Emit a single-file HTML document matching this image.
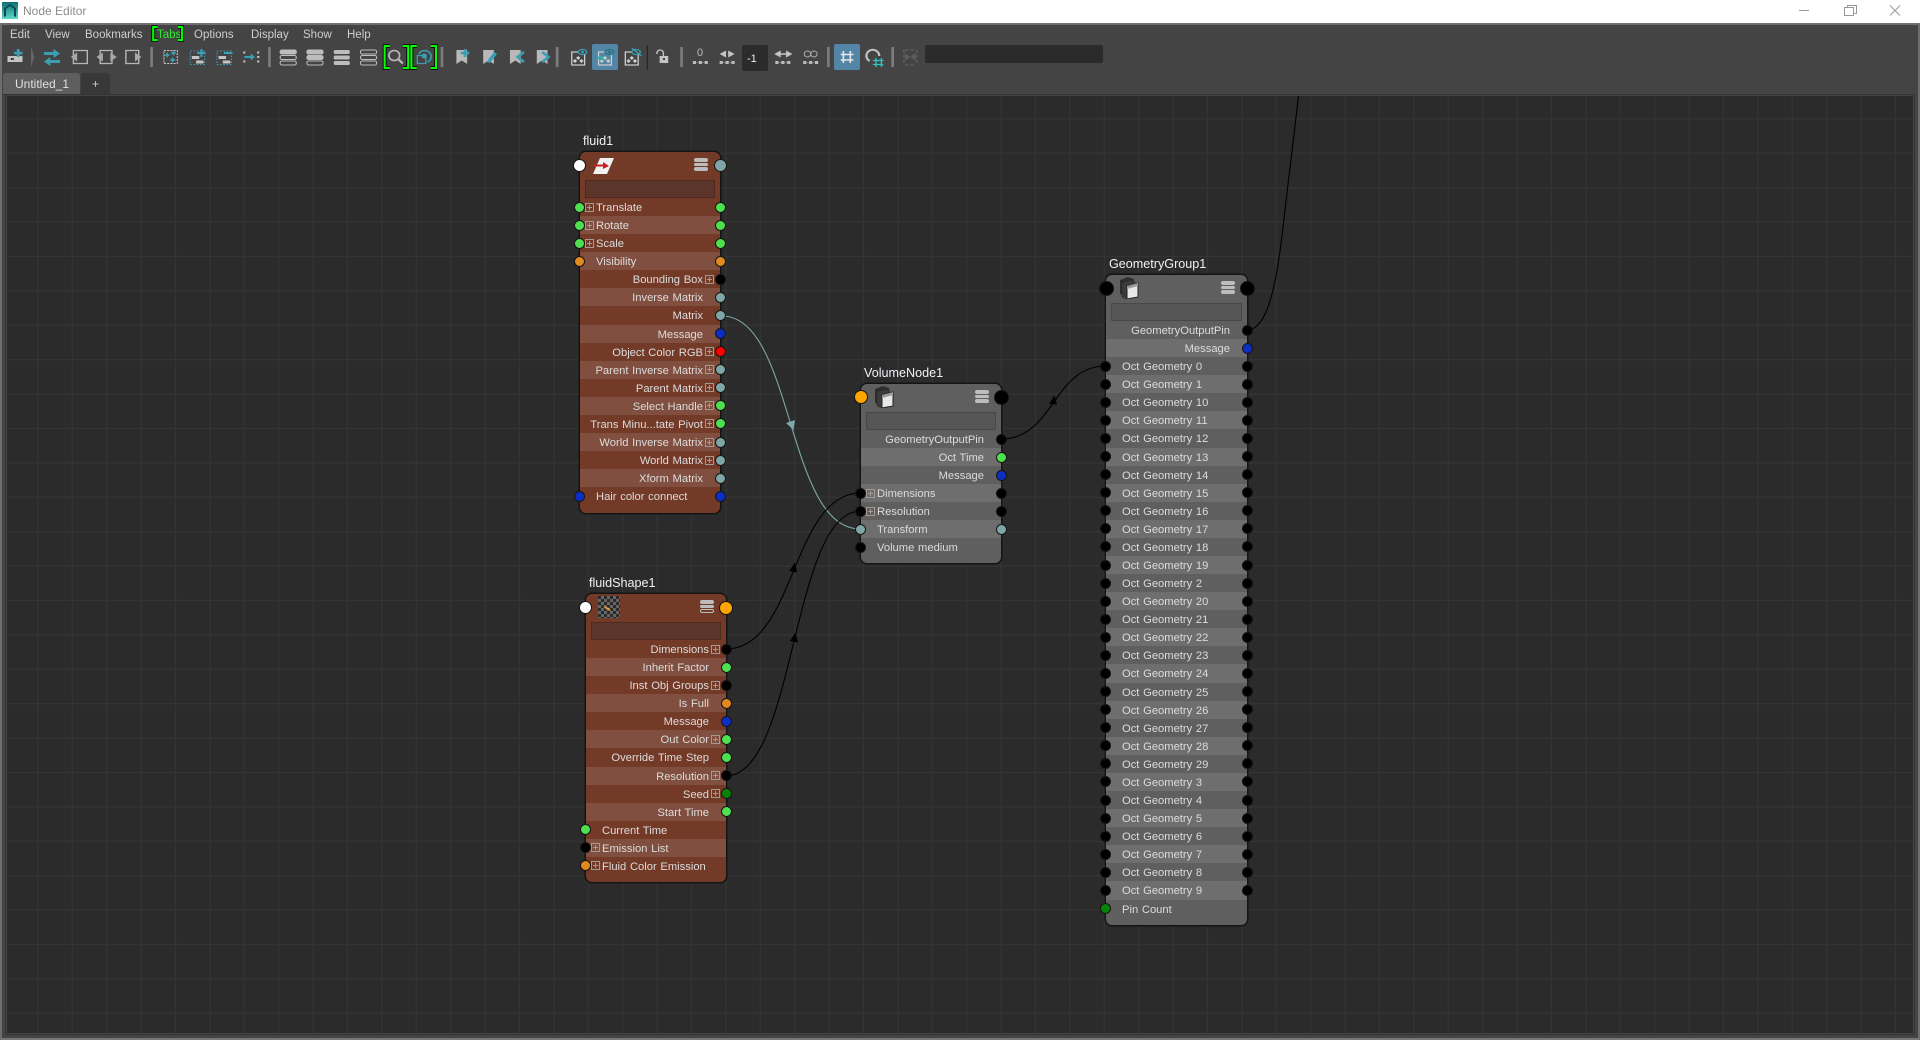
<!DOCTYPE html>
<html><head><meta charset="utf-8"><title>Node Editor</title>
<style>
html,body{margin:0;padding:0;width:1920px;height:1040px;overflow:hidden;background:#444;font-family:"Liberation Sans",sans-serif;font-size:12px;color:#d6d6d6}
.a{position:absolute}
#title{left:0;top:0;width:1920px;height:23px;background:#fff}
#frame{left:0;top:23px;width:1920px;height:1017px;box-sizing:border-box;border:2px solid #6e6e6e;border-bottom-color:#777;background:#444}
.m{position:absolute;top:28px;line-height:15px;font-size:11.5px;color:#cfcfcf;white-space:nowrap}
.n{position:absolute;border-radius:6px;box-shadow:0 0 0 1.5px #141414}
.f{background:#733a28}.h{background:#5f5f5f}
.nm{position:absolute;left:3px;top:-19px;font-size:12.6px;line-height:16px;color:#eef2f6;white-space:nowrap}
.s{position:absolute;left:5px;right:5px;top:28px;height:18px;box-sizing:border-box;border:1px solid}
.f .s{background:#5b3529;border-color:#4e2a1e}.h .s{background:#565656;border-color:#484848}
.rs{position:absolute;left:0;right:0;top:46px}
.r{position:relative;height:18.09px;line-height:20px;font-size:11.2px;word-spacing:.6px;color:#dcdcdc;white-space:nowrap}
.f .r:nth-child(even){background:#804f3f}
.h .r:nth-child(even){background:#6e6e6e}
.tl{position:absolute;left:16px}.tr{position:absolute;right:17px}
.p{position:absolute;top:3.5px;width:11px;height:11px;box-sizing:border-box;border:1px solid #141414;border-radius:50%}
.L{left:-6.5px}.R{right:-5.5px}
.g{background:#4ee04e}.o{background:#e08a1e}.b{background:#0b2fc4}.k{background:#000}.t{background:#7fa6a6}.e{background:#f00}.d{background:#078407}
.x{position:absolute;top:4.5px;width:9px;height:9px;box-sizing:border-box;border:1px solid #a39a96;background:linear-gradient(#a39a96,#a39a96) center/5px 1px no-repeat,linear-gradient(#a39a96,#a39a96) center/1px 5px no-repeat}
.xl{left:5px}.xr{right:6px}
.hp{position:absolute;top:7px;width:13px;height:13px;box-sizing:border-box;border-radius:50%;border:1px solid #141414}
.mn{position:absolute;top:6px;width:14px;height:14px}
.mn b{display:block;height:3.6px;margin-bottom:1px;background:#bdbdbd;border-radius:2px}
.mn b.u{background:none;box-sizing:border-box;border:1px solid #bdbdbd}
</style></head>
<body>
<div id="title" class="a">
<svg class="a" style="left:2px;top:2px" width="16" height="17"><defs><linearGradient id="lg" x1="0" y1="0" x2="0" y2="1"><stop offset="0" stop-color="#0c6f73"/><stop offset="1" stop-color="#5fd8c8"/></linearGradient></defs><rect width="16" height="17" fill="url(#lg)"/><path d="M2 15V6l6-4 6 4v9l-2-1V7L8 4 4 7v7z" fill="#0a4a55"/></svg>
<div class="a" style="left:23px;top:4px;line-height:15px;color:#8c8c8c">Node Editor</div>
<svg class="a" style="left:1790px;top:0" width="130" height="23" fill="none" stroke="#999" stroke-width="1"><path d="M9 10.5H19"/><path d="M54.500 7.500h9v8h-9zM57.500 7.500v-2h9v8h-3"/><path d="M100 5.500l10 10M110 5.500l-10 10"/></svg>
</div>
<div id="frame" class="a"></div>

<div class="m" style="left:10px">Edit</div>
<div class="m" style="left:45px">View</div>
<div class="m" style="left:85px">Bookmarks</div>
<div class="m" style="left:157px;color:#2fe82f">Tabs</div>
<div class="m" style="left:194px">Options</div>
<div class="m" style="left:251px">Display</div>
<div class="m" style="left:303px">Show</div>
<div class="m" style="left:347px">Help</div>

<div class="a" style="left:592px;top:44px;width:26px;height:26px;background:#5285a6;border-radius:2px"></div>
<div class="a" style="left:834px;top:44px;width:26px;height:26px;background:#5285a6;border-radius:2px"></div>
<div class="a" style="left:742px;top:45px;width:26px;height:26px;background:#2b2b2b;border-radius:2px;color:#eee;font-size:11px;line-height:28px;text-indent:5px">-1</div>
<div class="a" style="left:925px;top:45px;width:178px;height:18px;background:#2b2b2b;border-radius:2px"></div>
<div class="a" style="left:700px;top:47px;width:10px;margin-left:-5px;text-align:center;font-size:11px;line-height:13px;color:#bbb">0</div>

<svg class="a" style="left:0;top:0" width="1200" height="96" fill="none">
<defs>
<g id="lst0"><rect x="-7.500" y="-7" width="15" height="4" rx="1.500" stroke="#bdbdbd"/><rect x="-7.500" y="-1.500" width="15" height="4" rx="1.500" stroke="#bdbdbd"/><rect x="-7.500" y="4" width="15" height="4" rx="1.500" stroke="#bdbdbd"/></g>
<g id="eb"><rect x="-6" y="-6" width="12" height="13" stroke="#cfcfcf" stroke-width="1.200"/><path d="M0-2l2 2-2 2-2-2zM-3 1l2 2-2 2-2-2zM3 1l2 2-2 2-2-2z" fill="#cfcfcf"/></g>
<g id="dr"><rect x="-7" y="6" width="3" height="3" fill="#bbb"/><rect x="-1.500" y="6" width="3" height="3" fill="#bbb"/><rect x="4" y="6" width="3" height="3" fill="#bbb"/><path d="M-3.500 7.500h2M1.500 7.500h2.500" stroke="#777"/></g>
</defs>
<g transform="scale(1.0714 1)">
<!-- add node -->
<rect x="7" y="56" width="14" height="6" fill="#c4c4c4"/><rect x="10" y="58" width="3" height="2" fill="#444"/>
<path d="M17 49v8M13 53h8" stroke="#3a9fb5" stroke-width="2.500"/>
<path d="M29 47l3 10-3 10" fill="#666"/>
<!-- swap -->
<path d="M41 53.500h10" stroke="#3a9fb5" stroke-width="3"/><path d="M50 49l6 4.500-6 4.500z" fill="#3a9fb5"/>
<path d="M46 61.500h10" stroke="#3a9fb5" stroke-width="3"/><path d="M47 57l-6 4.500 6 4.500z" fill="#3a9fb5"/>
<!-- box arrows -->
<rect x="68.500" y="50.500" width="13" height="13" stroke="#b5b5b5" stroke-width="1.300"/><path d="M72 52.500v9l-6-4.500z" fill="#a8a8a8"/>
<rect x="93.500" y="50.500" width="11" height="13" stroke="#b5b5b5" stroke-width="1.300"/><path d="M96 52.500v9l-6-4.500zM103 52.500v9l6-4.500z" fill="#a8a8a8"/>
<rect x="117.500" y="50.500" width="12" height="13" stroke="#b5b5b5" stroke-width="1.300"/><path d="M126 52.500v9l6-4.500z" fill="#a8a8a8"/>
<path d="M141.500 47v20" stroke="#7c7c7c" stroke-width="2.500"/>
<!-- dotted frames -->
<rect x="153" y="50.500" width="12.500" height="13" stroke="#c5c5c5" stroke-dasharray="2 1"/><path d="M156 52l1 2 2 1-2 1-1 2-1-2-2-1 2-1zM162 50l1 2 2 1-2 1-1 2-1-2-2-1 2-1zM161 57l1.200 2 2 1-2 1-1.200 2-1-2-2-1 2-1z" fill="#3a9fb5"/>
<rect x="177.500" y="51" width="13.500" height="13.500" stroke="#3a9fb5" stroke-dasharray="1.500 1.500"/><rect x="179" y="56" width="7" height="3" fill="#c4c4c4"/><rect x="183" y="60.500" width="7" height="3" fill="#c4c4c4"/><path d="M188 49v8M184 53h8" stroke="#3a9fb5" stroke-width="2"/>
<rect x="202.500" y="51" width="13.500" height="13.500" stroke="#3a9fb5" stroke-dasharray="1.500 1.500"/><rect x="204" y="56" width="7" height="3" fill="#c4c4c4"/><rect x="208" y="60.500" width="7" height="3" fill="#c4c4c4"/><path d="M209 53h8" stroke="#3a9fb5" stroke-width="2"/>
<path d="M227 52.500h2M227 61.500h2M240 52.500h2M240 57h2M240 61.500h2" stroke="#c5c5c5" stroke-width="2"/><path d="M228 57h8" stroke="#3a9fb5" stroke-width="2"/><path d="M234 53.500l4 3.500-4 3.500z" fill="#3a9fb5"/>
<path d="M251.500 47v20" stroke="#7c7c7c" stroke-width="2.500"/>
<!-- stacks -->
<g transform="translate(269 57)"><use href="#lst0"/><rect x="-7.500" y="-7" width="15" height="4" rx="1.500" fill="#bdbdbd"/></g>
<g transform="translate(294 57)"><use href="#lst0"/><rect x="-7.500" y="-7" width="15" height="4" rx="1.500" fill="#bdbdbd"/><rect x="-7.500" y="-1.500" width="15" height="4" rx="1.500" fill="#bdbdbd"/></g>
<g transform="translate(319 57)"><rect x="-7.500" y="-7" width="15" height="4" rx="1.500" fill="#bdbdbd"/><rect x="-7.500" y="-1.500" width="15" height="4" rx="1.500" fill="#bdbdbd"/><rect x="-7.500" y="4" width="15" height="4" rx="1.500" fill="#bdbdbd"/></g>
<g transform="translate(344 57)"><use href="#lst0"/></g>
<!-- brackets -->
<g stroke="#000" stroke-width="3.500"><path d="M364 46h-5v22h5M376 46h5v22h-5M389 46h-5v22h5M402 46h5v22h-5M147 27h-4v13h4M166 27h4v13h-4"/></g>
<g stroke="#0f0" stroke-width="2"><path d="M364 46h-5v22h5M376 46h5v22h-5M389 46h-5v22h5M402 46h5v22h-5M147 27h-4v13h4M166 27h4v13h-4"/></g>
<circle cx="368" cy="55.500" r="5" stroke="#bdbdbd" stroke-width="1.500"/><path d="M372 59.500l4 4" stroke="#bdbdbd" stroke-width="2"/>
<rect x="389.500" y="55.500" width="8" height="8" stroke="#3a9fb5" stroke-width="1.200"/><path d="M391 54a6 6 0 1 1 8 8" stroke="#3a9fb5" stroke-width="1.500"/><circle cx="396" cy="56" r="2.500" fill="#3a9fb5"/>
<path d="M412.500 47v20" stroke="#7c7c7c" stroke-width="2.500"/>
<!-- bookmarks -->
<g fill="#b9b9b9"><path d="M426 50h10v14l-5-3.500-5 3.500z"/><path d="M451 50h10v14l-5-3.500-5 3.500z"/><path d="M476 50h10v14l-5-3.500-5 3.500z"/><path d="M501 50h10v14l-5-3.500-5 3.500z"/></g>
<path d="M434 49v8M430 53h8" stroke="#3a9fb5" stroke-width="2.500"/>
<path d="M454 62l7-10 3 2-7 9z" fill="#3a9fb5"/>
<path d="M489 52l-6 5 6 5" stroke="#3a9fb5" stroke-width="2.500"/>
<path d="M506 52l6 5-6 5" stroke="#3a9fb5" stroke-width="2.500"/>
<path d="M520 47v20" stroke="#7c7c7c" stroke-width="2.500"/>
</g>
<g transform="translate(-40 0) scale(1.0714 1)">
<!-- eyes -->
<g transform="translate(577 58)"><use href="#eb"/><ellipse cx="4" cy="-6" rx="4" ry="2.500" stroke="#3a9fb5" stroke-width="1.200" fill="#444"/><circle cx="4" cy="-6" r="1.300" fill="#3a9fb5"/></g>
<g transform="translate(602 58)"><use href="#eb"/><ellipse cx="4" cy="-6" rx="4" ry="2.500" stroke="#2a6f80" stroke-width="1.200" fill="#5285a6"/><circle cx="4" cy="-6" r="1.300" fill="#2a6f80"/><circle cx="-4" cy="0" r="2.500" fill="#3aa"/></g>
<g transform="translate(627 58)"><use href="#eb"/><ellipse cx="4" cy="-6" rx="4" ry="2.500" stroke="#3a9fb5" stroke-width="1.200" fill="#444"/><path d="M0-10l9 8" stroke="#3a9fb5" stroke-width="1.200"/></g>
<path d="M641.500 45v25" stroke="#222"/>
<!-- lock -->
<rect x="653" y="56" width="8" height="7" fill="#c4c4c4"/><rect x="656" y="58" width="2" height="2" fill="#444"/><path d="M650.500 54v-1a3 3 0 0 1 6 0v3" stroke="#c4c4c4" stroke-width="1.300"/>
<path d="M673.500 47v20" stroke="#7c7c7c" stroke-width="2.500"/>
<!-- spacing -->
<use href="#dr" x="691" y="55"/>
<path d="M715 50.500l-6 3.500 6 3.500zM717 50.500l6 3.500-6 3.500z" fill="#c4c4c4"/><use href="#dr" x="716" y="55"/>
<path d="M766 50.500l-6 3.500 6 3.500zM771 50.500l6 3.500-6 3.500z" fill="#c4c4c4"/><path d="M765 54h8" stroke="#c4c4c4" stroke-width="1.500"/><use href="#dr" x="768" y="55"/>
<circle cx="791" cy="54" r="3" stroke="#aaa"/><circle cx="797" cy="54" r="3" stroke="#aaa"/><use href="#dr" x="794" y="55"/>
<path d="M810.500 47v20" stroke="#7c7c7c" stroke-width="2.500"/>
<path d="M824.500 51v12M831 51v12M822 54.500h12M822 60h12" stroke="#e6e6e6" stroke-width="1.500"/>
<!-- magnet -->
<path d="M849 61a6 6 0 1 1 9-5" stroke="#c4c4c4" stroke-width="2"/><path d="M855 58v9M860 58v9M852 60.500h10M852 64.500h10" stroke="#2fc4c4" stroke-width="1.300"/>
<path d="M870.500 47v20" stroke="#7c7c7c" stroke-width="2.500"/>
<path d="M882 50h10M882 65h10M881 50v15M893 50v15" stroke="#5c5c5c" stroke-width="1.500" stroke-dasharray="3 2"/><path d="M882 53l5 4-5 4zM892 53l-5 4 5 4z" fill="#5c5c5c"/>
</g>
</svg>

<!-- tabs -->
<div class="a" style="left:3px;top:73px;width:77px;height:21px;background:#5e5e5e;border-radius:3px 3px 0 0;line-height:22px;text-indent:12px;color:#e2e2e2">Untitled_1</div>
<div class="a" style="left:81px;top:73px;width:29px;height:21px;background:#383838;border-radius:3px 3px 0 0;line-height:23px;text-align:center;color:#ccc">+</div>
<div class="a" style="left:3px;top:94px;width:1912px;height:1px;background:#333"></div>

<!-- canvas -->
<svg class="a" style="left:0;top:0" width="1920" height="1040" fill="none">
<defs>
<pattern id="gr" patternUnits="userSpaceOnUse" x="2.900" y="15.100" width="34.400" height="34.400"><path d="M.5 0V34.400M0 .5H34.400" stroke="#353535" stroke-width="1.200"/></pattern>
<clipPath id="cl"><rect x="7" y="96" width="1906" height="937"/></clipPath>
</defs>
<rect x="7" y="96" width="1906" height="937" fill="#2b2b2b"/>
<rect x="7" y="96" width="1906" height="937" fill="url(#gr)"/>
<rect x="5.500" y="94.500" width="1909" height="940" stroke="#333"/>
<g clip-path="url(#cl)" stroke-width="1.100">
<path d="M722 316C794 316 786 529 860 529" stroke="#7fa8a8"/>
<path d="M786 423l9-3-1.500 10z" fill="#7fa8a8"/>
<path d="M726 649C796 649 791 493 861 493" stroke="#000"/>
<path d="M789 571l8 1.500-2-10z" fill="#000"/>
<path d="M726 775.700C796 775.700 791 511 861 511" stroke="#000"/>
<path d="M790 641l8 1.500-2.500-10z" fill="#000"/>
<path d="M1001 439C1054 439 1053 366 1106 366" stroke="#000"/>
<path d="M1049 404l8 .5-2.500-9z" fill="#000"/>
<path d="M1247 330C1272 330 1279 262 1285 210S1296 120 1299 90" stroke="#000"/>
</g>
</svg>

<!-- fluid1 -->
<div class="n f" style="left:580px;top:152px;width:140px;height:361px">
<div class="nm">fluid1</div>
<div class="hp" style="left:-7.500px;background:#fff"></div>
<svg class="a" style="left:12px;top:4px" width="22" height="20"><path d="M8 2h14l-7 16H1z" fill="#f2f2f2"/><path d="M1 9.500h11" stroke="#c8202a" stroke-width="2"/><path d="M11 6l6 4-6 3z" fill="#c8202a"/></svg>
<div class="mn" style="right:12px"><b></b><b></b><b></b></div>
<div class="hp t" style="right:-6.500px"></div>
<div class="s"></div>
<div class="rs">
<div class="r"><i class="p L g"></i><i class="x xl"></i><span class="tl">Translate</span><i class="p R g"></i></div>
<div class="r"><i class="p L g"></i><i class="x xl"></i><span class="tl">Rotate</span><i class="p R g"></i></div>
<div class="r"><i class="p L g"></i><i class="x xl"></i><span class="tl">Scale</span><i class="p R g"></i></div>
<div class="r"><i class="p L o"></i><span class="tl">Visibility</span><i class="p R o"></i></div>
<div class="r"><span class="tr">Bounding Box</span><i class="x xr"></i><i class="p R k"></i></div>
<div class="r"><span class="tr">Inverse Matrix</span><i class="p R t"></i></div>
<div class="r"><span class="tr">Matrix</span><i class="p R t"></i></div>
<div class="r"><span class="tr">Message</span><i class="p R b"></i></div>
<div class="r"><span class="tr">Object Color RGB</span><i class="x xr"></i><i class="p R e"></i></div>
<div class="r"><span class="tr">Parent Inverse Matrix</span><i class="x xr"></i><i class="p R t"></i></div>
<div class="r"><span class="tr">Parent Matrix</span><i class="x xr"></i><i class="p R t"></i></div>
<div class="r"><span class="tr">Select Handle</span><i class="x xr"></i><i class="p R g"></i></div>
<div class="r"><span class="tr">Trans Minu...tate Pivot</span><i class="x xr"></i><i class="p R g"></i></div>
<div class="r"><span class="tr">World Inverse Matrix</span><i class="x xr"></i><i class="p R t"></i></div>
<div class="r"><span class="tr">World Matrix</span><i class="x xr"></i><i class="p R t"></i></div>
<div class="r"><span class="tr">Xform Matrix</span><i class="p R t"></i></div>
<div class="r"><i class="p L b"></i><span class="tl">Hair color connect</span><i class="p R b"></i></div>
</div></div>

<!-- fluidShape1 -->
<div class="n f" style="left:586px;top:594px;width:140px;height:288px">
<div class="nm">fluidShape1</div>
<div class="hp" style="left:-7.500px;background:#fff"></div>
<svg class="a" style="left:12px;top:2px" width="22" height="22"><defs><pattern id="ck" patternUnits="userSpaceOnUse" width="6" height="6"><rect width="6" height="6" fill="#666"/><rect width="3" height="3" fill="#2a2a2a"/><rect x="3" y="3" width="3" height="3" fill="#2a2a2a"/></pattern></defs><rect width="22" height="22" fill="url(#ck)"/><path d="M5 10l6 2 2 3-5-2z" fill="#e8a030"/></svg>
<div class="mn" style="right:12px"><b></b><b></b><b class="u"></b></div>
<div class="hp" style="right:-7px;width:14px;height:14px;top:6.500px;background:#ffa500"></div>
<div class="s"></div>
<div class="rs">
<div class="r"><span class="tr">Dimensions</span><i class="x xr"></i><i class="p R k"></i></div>
<div class="r"><span class="tr">Inherit Factor</span><i class="p R g"></i></div>
<div class="r"><span class="tr">Inst Obj Groups</span><i class="x xr"></i><i class="p R k"></i></div>
<div class="r"><span class="tr">Is Full</span><i class="p R o"></i></div>
<div class="r"><span class="tr">Message</span><i class="p R b"></i></div>
<div class="r"><span class="tr">Out Color</span><i class="x xr"></i><i class="p R g"></i></div>
<div class="r"><span class="tr">Override Time Step</span><i class="p R g"></i></div>
<div class="r"><span class="tr">Resolution</span><i class="x xr"></i><i class="p R k"></i></div>
<div class="r"><span class="tr">Seed</span><i class="x xr"></i><i class="p R d"></i></div>
<div class="r"><span class="tr">Start Time</span><i class="p R g"></i></div>
<div class="r"><i class="p L g"></i><span class="tl">Current Time</span></div>
<div class="r"><i class="p L k"></i><i class="x xl"></i><span class="tl">Emission List</span></div>
<div class="r"><i class="p L o"></i><i class="x xl"></i><span class="tl">Fluid Color Emission</span></div>
</div></div>

<!-- VolumeNode1 -->
<div class="n h" style="left:861px;top:384px;width:140px;height:179px">
<div class="nm">VolumeNode1</div>
<div class="hp" style="left:-7px;width:14px;height:14px;top:6px;background:#ffa500"></div>
<svg class="a" style="left:12px;top:2px" width="22" height="22"><path d="M2 3l8-3 6 2v14l-8 3-6-2z" fill="#2e2e2e"/><path d="M4 6l8-3 5 2v14l-8 3-5-2z" fill="#3c3c3c" stroke="#222" stroke-width=".5"/><path d="M9 9l11-3v14l-11 2z" fill="#e8e8e8" stroke="#222"/><path d="M9 9l11-3v3l-11 3z" fill="#999"/></svg>
<div class="mn" style="right:12px"><b></b><b></b><b></b></div>
<div class="hp k" style="right:-7.500px;width:15px;height:15px;top:5.500px"></div>
<div class="s"></div>
<div class="rs">
<div class="r"><span class="tr">GeometryOutputPin</span><i class="p R k"></i></div>
<div class="r"><span class="tr">Oct Time</span><i class="p R g"></i></div>
<div class="r"><span class="tr">Message</span><i class="p R b"></i></div>
<div class="r"><i class="p L k"></i><i class="x xl"></i><span class="tl">Dimensions</span><i class="p R k"></i></div>
<div class="r"><i class="p L k"></i><i class="x xl"></i><span class="tl">Resolution</span><i class="p R k"></i></div>
<div class="r"><i class="p L t"></i><span class="tl">Transform</span><i class="p R t"></i></div>
<div class="r"><i class="p L k"></i><span class="tl">Volume medium</span></div>
</div></div>

<!-- GeometryGroup1 -->
<div class="n h" style="left:1106px;top:275px;width:141px;height:650px">
<div class="nm">GeometryGroup1</div>
<div class="hp k" style="left:-7.500px;width:15px;height:15px;top:5.500px"></div>
<svg class="a" style="left:12px;top:2px" width="22" height="22"><path d="M2 3l8-3 6 2v14l-8 3-6-2z" fill="#2e2e2e"/><path d="M4 6l8-3 5 2v14l-8 3-5-2z" fill="#3c3c3c" stroke="#222" stroke-width=".5"/><path d="M9 9l11-3v14l-11 2z" fill="#e8e8e8" stroke="#222"/><path d="M9 9l11-3v3l-11 3z" fill="#999"/></svg>
<div class="mn" style="right:12px"><b></b><b></b><b></b></div>
<div class="hp k" style="right:-7.500px;width:15px;height:15px;top:5.500px"></div>
<div class="s"></div>
<div class="rs">
<div class="r"><span class="tr">GeometryOutputPin</span><i class="p R k"></i></div>
<div class="r"><span class="tr">Message</span><i class="p R b"></i></div>
<div class="r"><i class="p L k"></i><span class="tl">Oct Geometry 0</span><i class="p R k"></i></div>
<div class="r"><i class="p L k"></i><span class="tl">Oct Geometry 1</span><i class="p R k"></i></div>
<div class="r"><i class="p L k"></i><span class="tl">Oct Geometry 10</span><i class="p R k"></i></div>
<div class="r"><i class="p L k"></i><span class="tl">Oct Geometry 11</span><i class="p R k"></i></div>
<div class="r"><i class="p L k"></i><span class="tl">Oct Geometry 12</span><i class="p R k"></i></div>
<div class="r"><i class="p L k"></i><span class="tl">Oct Geometry 13</span><i class="p R k"></i></div>
<div class="r"><i class="p L k"></i><span class="tl">Oct Geometry 14</span><i class="p R k"></i></div>
<div class="r"><i class="p L k"></i><span class="tl">Oct Geometry 15</span><i class="p R k"></i></div>
<div class="r"><i class="p L k"></i><span class="tl">Oct Geometry 16</span><i class="p R k"></i></div>
<div class="r"><i class="p L k"></i><span class="tl">Oct Geometry 17</span><i class="p R k"></i></div>
<div class="r"><i class="p L k"></i><span class="tl">Oct Geometry 18</span><i class="p R k"></i></div>
<div class="r"><i class="p L k"></i><span class="tl">Oct Geometry 19</span><i class="p R k"></i></div>
<div class="r"><i class="p L k"></i><span class="tl">Oct Geometry 2</span><i class="p R k"></i></div>
<div class="r"><i class="p L k"></i><span class="tl">Oct Geometry 20</span><i class="p R k"></i></div>
<div class="r"><i class="p L k"></i><span class="tl">Oct Geometry 21</span><i class="p R k"></i></div>
<div class="r"><i class="p L k"></i><span class="tl">Oct Geometry 22</span><i class="p R k"></i></div>
<div class="r"><i class="p L k"></i><span class="tl">Oct Geometry 23</span><i class="p R k"></i></div>
<div class="r"><i class="p L k"></i><span class="tl">Oct Geometry 24</span><i class="p R k"></i></div>
<div class="r"><i class="p L k"></i><span class="tl">Oct Geometry 25</span><i class="p R k"></i></div>
<div class="r"><i class="p L k"></i><span class="tl">Oct Geometry 26</span><i class="p R k"></i></div>
<div class="r"><i class="p L k"></i><span class="tl">Oct Geometry 27</span><i class="p R k"></i></div>
<div class="r"><i class="p L k"></i><span class="tl">Oct Geometry 28</span><i class="p R k"></i></div>
<div class="r"><i class="p L k"></i><span class="tl">Oct Geometry 29</span><i class="p R k"></i></div>
<div class="r"><i class="p L k"></i><span class="tl">Oct Geometry 3</span><i class="p R k"></i></div>
<div class="r"><i class="p L k"></i><span class="tl">Oct Geometry 4</span><i class="p R k"></i></div>
<div class="r"><i class="p L k"></i><span class="tl">Oct Geometry 5</span><i class="p R k"></i></div>
<div class="r"><i class="p L k"></i><span class="tl">Oct Geometry 6</span><i class="p R k"></i></div>
<div class="r"><i class="p L k"></i><span class="tl">Oct Geometry 7</span><i class="p R k"></i></div>
<div class="r"><i class="p L k"></i><span class="tl">Oct Geometry 8</span><i class="p R k"></i></div>
<div class="r"><i class="p L k"></i><span class="tl">Oct Geometry 9</span><i class="p R k"></i></div>
<div class="r"><i class="p L d"></i><span class="tl">Pin Count</span></div>
</div></div>
</body></html>
